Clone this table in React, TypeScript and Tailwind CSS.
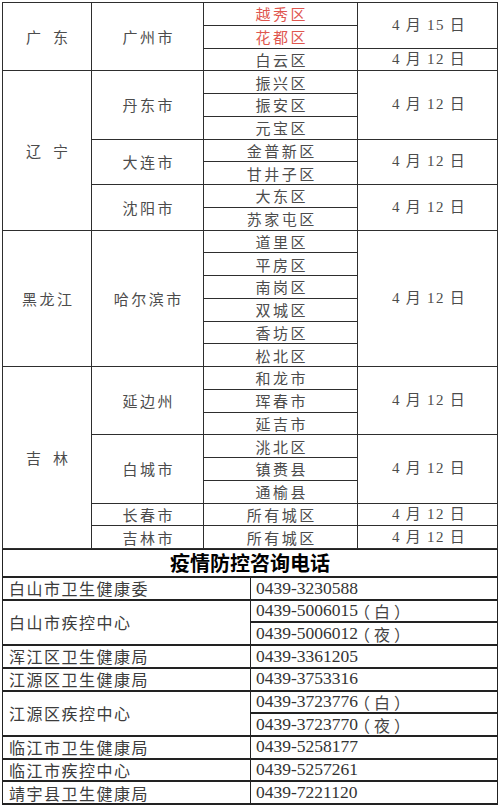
import React from "react";

// 字体：中文用思源黑体，数字用 Liberation Serif
const cjk = "font-['Noto_Sans_CJK_SC',sans-serif]";
const serif = "font-['Liberation_Serif','Noto_Sans_CJK_SC',serif]";

const spanClass: Record<number, string> = {
  1: "",
  2: "row-span-2",
  3: "row-span-3",
  6: "row-span-6",
  7: "row-span-7",
  8: "row-span-8",
};

type Group = { dists: string[]; date: string; red?: boolean };
type City = { name: string; groups: Group[] };
type Province = { name: string; spaced?: boolean; cities: City[] };

const d12 = "4 月 12 日";

const provinces: Province[] = [
  {
    name: "广东",
    spaced: true,
    cities: [
      {
        name: "广州市",
        groups: [
          { dists: ["越秀区", "花都区"], date: "4 月 15 日", red: true },
          { dists: ["白云区"], date: d12 },
        ],
      },
    ],
  },
  {
    name: "辽宁",
    spaced: true,
    cities: [
      { name: "丹东市", groups: [{ dists: ["振兴区", "振安区", "元宝区"], date: d12 }] },
      { name: "大连市", groups: [{ dists: ["金普新区", "甘井子区"], date: d12 }] },
      { name: "沈阳市", groups: [{ dists: ["大东区", "苏家屯区"], date: d12 }] },
    ],
  },
  {
    name: "黑龙江",
    cities: [
      {
        name: "哈尔滨市",
        groups: [{ dists: ["道里区", "平房区", "南岗区", "双城区", "香坊区", "松北区"], date: d12 }],
      },
    ],
  },
  {
    name: "吉林",
    spaced: true,
    cities: [
      { name: "延边州", groups: [{ dists: ["和龙市", "珲春市", "延吉市"], date: d12 }] },
      { name: "白城市", groups: [{ dists: ["洮北区", "镇赉县", "通榆县"], date: d12 }] },
      { name: "长春市", groups: [{ dists: ["所有城区"], date: d12 }] },
      { name: "吉林市", groups: [{ dists: ["所有城区"], date: d12 }] },
    ],
  },
];

const phones: { org: string; nums: { n: string; note?: string }[] }[] = [
  { org: "白山市卫生健康委", nums: [{ n: "0439-3230588" }] },
  { org: "白山市疾控中心", nums: [{ n: "0439-5006015", note: "（白）" }, { n: "0439-5006012", note: "（夜）" }] },
  { org: "浑江区卫生健康局", nums: [{ n: "0439-3361205" }] },
  { org: "江源区卫生健康局", nums: [{ n: "0439-3753316" }] },
  { org: "江源区疾控中心", nums: [{ n: "0439-3723776", note: "（白）" }, { n: "0439-3723770", note: "（夜）" }] },
  { org: "临江市卫生健康局", nums: [{ n: "0439-5258177" }] },
  { org: "临江市疾控中心", nums: [{ n: "0439-5257261" }] },
  { org: "靖宇县卫生健康局", nums: [{ n: "0439-7221120" }] },
];

const cell = "bg-white flex items-center justify-center min-h-0";

const CnText: React.FC<{ text: string; spaced?: boolean; red?: boolean }> = ({ text, spaced, red }) => {
  const color = red ? "text-[#e0574f]" : "text-[#4c4c4c]";
  if (spaced) {
    return (
      <div className={`flex gap-[12px] text-[15px] leading-none ${cjk} ${color}`}>
        {text.split("").map((c, i) => (
          <span key={i}>{c}</span>
        ))}
      </div>
    );
  }
  return (
    <span className={`text-[15px] leading-none tracking-[2.5px] pl-[2.5px] ${cjk} ${color}`}>{text}</span>
  );
};

function renderUpper() {
  const items: React.ReactNode[] = [];
  provinces.forEach((p) => {
    const pRows = p.cities.reduce((s, c) => s + c.groups.reduce((g, x) => g + x.dists.length, 0), 0);
    items.push(
      <div key={`p-${p.name}`} className={`${cell} ${spanClass[pRows]}`}>
        <CnText text={p.name} spaced={p.spaced} />
      </div>
    );
    p.cities.forEach((c) => {
      const cRows = c.groups.reduce((g, x) => g + x.dists.length, 0);
      items.push(
        <div key={`c-${p.name}-${c.name}`} className={`${cell} ${spanClass[cRows]}`}>
          <CnText text={c.name} />
        </div>
      );
      c.groups.forEach((g, gi) => {
        g.dists.forEach((d, di) => {
          items.push(
            <div key={`d-${c.name}-${gi}-${di}`} className={cell}>
              <CnText text={d} red={g.red} />
            </div>
          );
          if (di === 0) {
            items.push(
              <div key={`t-${c.name}-${gi}`} className={`${cell} ${spanClass[g.dists.length]}`}>
                <span className={`text-[15px] leading-none tracking-[1.3px] pl-[3px] text-[#4c4c4c] ${serif}`}>
                  {g.date}
                </span>
              </div>
            );
          }
        });
      });
    });
  });
  return items;
}

export default function App() {
  return (
    <div className="w-[500px] h-[810px] bg-white pt-[2px] pl-[2px] overflow-hidden">
      {/* 上半部分：地区表 */}
      <div className="w-[496px] h-[547px] grid grid-cols-[88px_111px_153px_139px] grid-rows-[repeat(24,minmax(0,1fr))] gap-px p-px bg-[#2e2e2e]">
        {renderUpper()}
      </div>

      {/* 标题 */}
      <div className="w-[496px] h-[29px] border-t border-x border-b-2 border-[#222] flex items-center justify-center">
        <span className={`text-[20px] font-bold leading-none text-black ${cjk}`}>疫情防控咨询电话</span>
      </div>

      {/* 下半部分：电话表 */}
      <div className="w-[496px] h-[227px] grid grid-cols-[247px_246px] grid-rows-[repeat(10,minmax(0,1fr))] gap-x-px gap-y-[2px] px-px pb-[2px] bg-[#222]">
        {phones.map((row) => (
          <React.Fragment key={row.org}>
            <div
              className={`bg-white flex items-center pl-[6px] min-h-0 ${row.nums.length === 2 ? "row-span-2" : ""}`}
            >
              <span className={`text-[16px] leading-none tracking-[1.5px] text-[#3c3c3c] ${cjk}`}>{row.org}</span>
            </div>
            {row.nums.map((x) => (
              <div key={x.n} className="bg-white flex items-center pl-[5px] min-h-0">
                <span className={`text-[17.5px] leading-none text-[#333] ${serif}`}>{x.n}</span>
                {x.note && (
                  <span className={`-ml-[4px] text-[16px] leading-none tracking-[4px] text-[#444] ${cjk}`}>{x.note}</span>
                )}
              </div>
            ))}
          </React.Fragment>
        ))}
      </div>
    </div>
  );
}
